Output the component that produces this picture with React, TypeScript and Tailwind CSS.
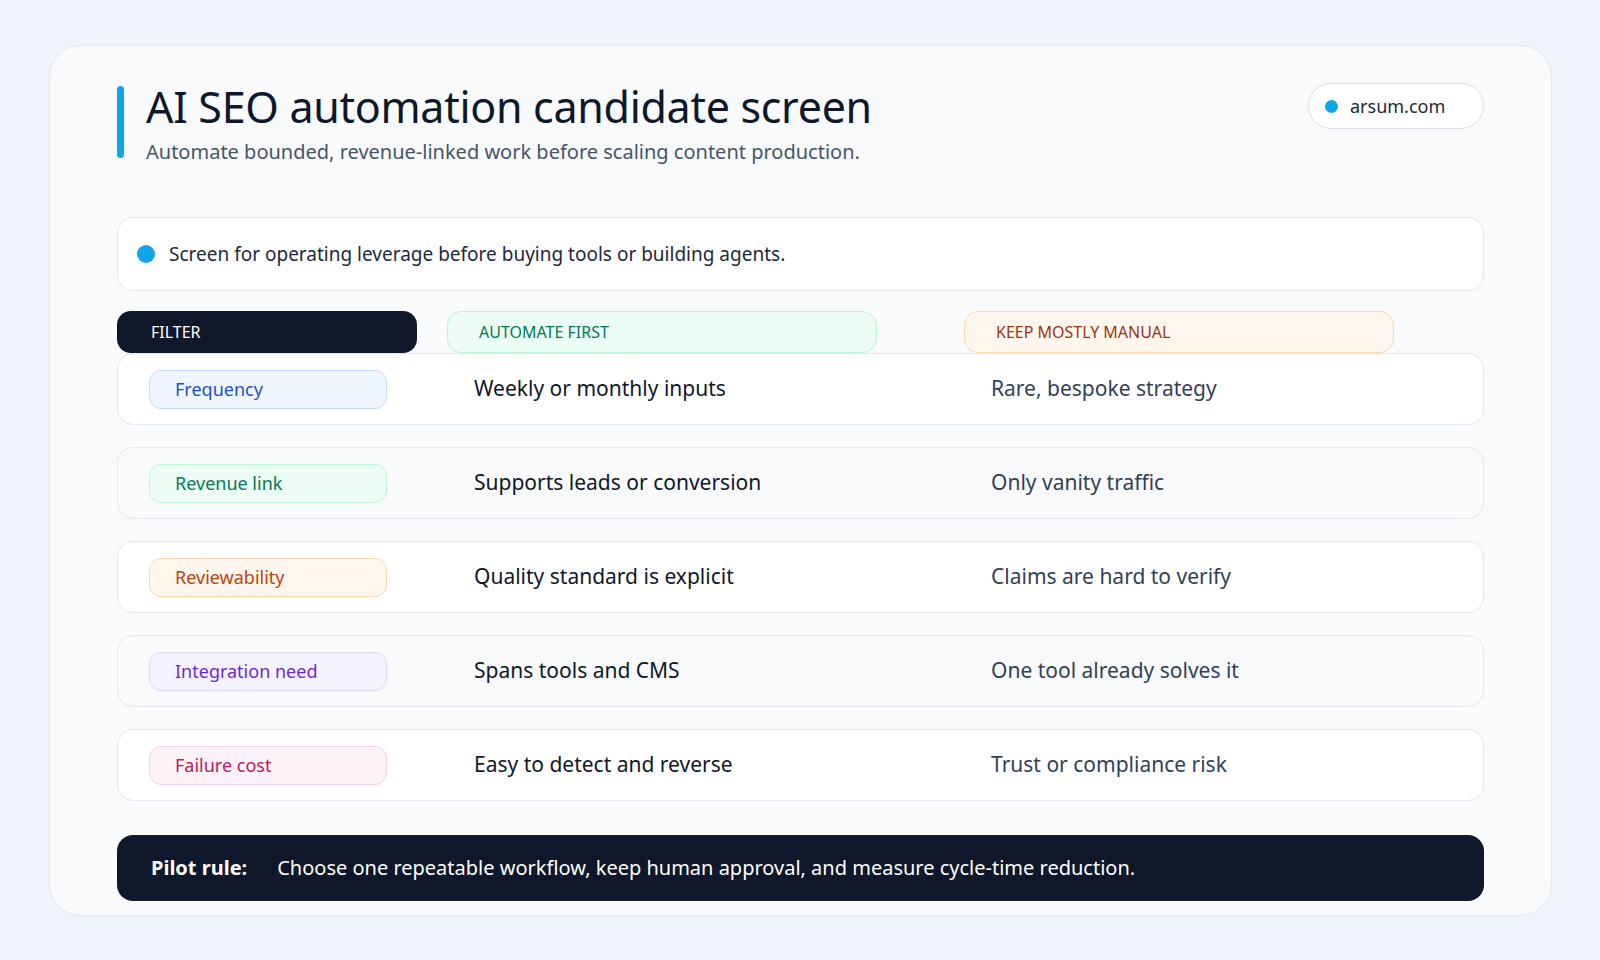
import React from 'react';

const rows = [
  { tag: 'Frequency', pill: 'bg-[#eff6ff] border-[#bfdbfe] text-[#1d4ed8]', auto: 'Weekly or monthly inputs', manual: 'Rare, bespoke strategy', bg: 'bg-white' },
  { tag: 'Revenue link', pill: 'bg-[#ecfdf5] border-[#bbf7d0] text-[#047857]', auto: 'Supports leads or conversion', manual: 'Only vanity traffic', bg: 'bg-[#f8fafc]' },
  { tag: 'Reviewability', pill: 'bg-[#fff7ed] border-[#fed7aa] text-[#c2410c]', auto: 'Quality standard is explicit', manual: 'Claims are hard to verify', bg: 'bg-white' },
  { tag: 'Integration need', pill: 'bg-[#f5f3ff] border-[#ddd6fe] text-[#6d28d9]', auto: 'Spans tools and CMS', manual: 'One tool already solves it', bg: 'bg-[#f8fafc]' },
  { tag: 'Failure cost', pill: 'bg-[#fdf2f8] border-[#fbcfe8] text-[#be185d]', auto: 'Easy to detect and reverse', manual: 'Trust or compliance risk', bg: 'bg-white' },
];

export default function App() {
  return (
    <div className="w-[1600px] h-[960px] bg-[#eef4fa] pt-[45px] pl-[49px] font-['Liberation_Sans',Arial,sans-serif]">
      <div className="w-[1503px] h-[871px] rounded-[32px] border border-[#e2e8f0] bg-[#f8fafc] pt-[35px] px-[67px]">
        <div className="flex justify-between">
          <div className="flex gap-[22px]">
            <div className="w-[7px] h-[72px] mt-[5px] rounded-full bg-[#0ea5e9]" />
            <div>
              <h1 className="text-[43px] leading-[52px] text-[#0f172a] tracking-[-0.3px]">AI SEO automation candidate screen</h1>
              <p className="text-[20px] leading-[28px] mt-[5px] text-[#475569]">Automate bounded, revenue-linked work before scaling content production.</p>
            </div>
          </div>
          <div className="h-[46px] w-[176px] mt-[2px] rounded-full border border-[#d9e0ea] bg-white flex items-center pl-[16px] gap-[12px]">
            <span className="w-[13px] h-[13px] rounded-full bg-[#0ea5e9]" />
            <span className="text-[18px] text-[#1e293b]">arsum.com</span>
          </div>
        </div>

        <div className="mt-[51px] h-[74px] rounded-[16px] border border-[#e2e8f0] bg-white flex items-center pl-[19px] gap-[14px]">
          <span className="w-[18px] h-[18px] rounded-full bg-[#0ea5e9]" />
          <span className="text-[19px] text-[#1e293b]">Screen for operating leverage before buying tools or building agents.</span>
        </div>

        <div className="mt-[20px] grid grid-cols-[300px_30px_430px_87px_430px] h-[42px] text-[16px] uppercase">
          <div className="rounded-[14px] bg-[#0f172a] text-white flex items-center pl-[34px]">Filter</div>
          <div />
          <div className="rounded-[14px] bg-[#ecfdf5] border border-[#bbf7d0] text-[#047857] flex items-center pl-[31px]">Automate first</div>
          <div />
          <div className="rounded-[14px] bg-[#fff7ed] border border-[#fed7aa] text-[#9a3412] flex items-center pl-[31px]">Keep mostly manual</div>
        </div>

        <div className="flex flex-col gap-[22px]">
          {rows.map((r) => (
            <div key={r.tag} className={`h-[72px] rounded-[16px] border border-[#e2e8f0] ${r.bg} grid grid-cols-[330px_517px_1fr] items-center`}>
              <div className="pl-[31px]">
                <div className={`w-[238px] h-[39px] rounded-[12px] border flex items-center pl-[25px] text-[18px] ${r.pill}`}>{r.tag}</div>
              </div>
              <div className="pl-[26px] text-[21px] text-[#0f172a]">{r.auto}</div>
              <div className="pl-[26px] text-[21px] text-[#334155]">{r.manual}</div>
            </div>
          ))}
        </div>

        <div className="mt-[34px] h-[66px] rounded-[16px] bg-[#0f172a] flex items-center pl-[34px] text-[20px] text-white">
          <span className="font-bold">Pilot rule:</span>
          <span className="ml-[30px]">Choose one repeatable workflow, keep human approval, and measure cycle-time reduction.</span>
        </div>
      </div>
    </div>
  );
}
